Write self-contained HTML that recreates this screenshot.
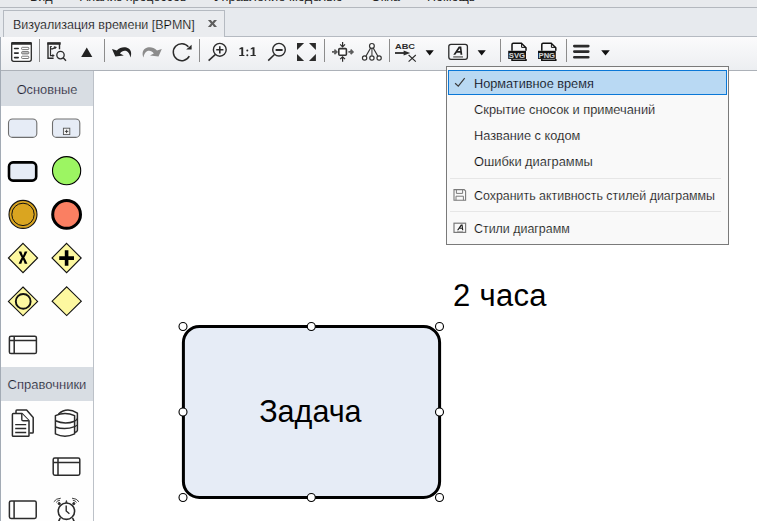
<!DOCTYPE html>
<html><head><meta charset="utf-8">
<style>
*{margin:0;padding:0;box-sizing:border-box}
html,body{width:757px;height:521px;overflow:hidden;background:#fff;font-family:"Liberation Sans",sans-serif;position:relative}
.a{position:absolute}
.t{white-space:nowrap;line-height:1}
.mi{position:absolute;left:474px;font-size:12.5px;color:#000;white-space:nowrap;line-height:1;-webkit-text-stroke:0.2px #f9f9f9}
.sep{position:absolute;top:39px;width:1px;height:23px;background:#8c8c8c}
.hdr{position:absolute;left:1px;width:92px;background:#d8dde3;color:#1f2430;-webkit-text-stroke:0.2px #d8dde3;font-size:12.5px;text-align:center;line-height:1}
</style></head><body>
<!-- top menu strip -->
<div class="a" style="left:0;top:0;width:757px;height:7px;background:#e8eaed"></div>
<div class="a" style="left:0;top:7px;width:757px;height:1px;background:#b4b8be"></div>
<div class="a" style="left:0;top:8px;width:757px;height:29px;background:#e7eaee"></div>
<div class="a t" style="left:30px;top:-9px;font-size:12.5px;color:#222">Вид</div>
<div class="a t" style="left:80px;top:-9px;font-size:12.5px;color:#222">Анализ процессов</div>
<div class="a t" style="left:214px;top:-9px;font-size:12.85px;color:#222">Управление моделью</div>
<div class="a t" style="left:371px;top:-9px;font-size:12.5px;color:#222">Окна</div>
<div class="a t" style="left:427px;top:-9px;font-size:12.5px;color:#222">Помощь</div>
<!-- tab -->
<div class="a" style="left:224px;top:36px;width:533px;height:1px;background:#b5bac1"></div>
<div class="a" style="left:3px;top:10px;width:222px;height:27px;background:#eaecef;border:1px solid #b5bac1;border-bottom:none"></div>
<div class="a t" style="left:13px;top:19px;font-size:12.5px;color:#000;-webkit-text-stroke:0.2px #eaecef">Визуализация времени [BPMN]</div>
<svg class="a" style="left:0;top:0" width="240" height="40" viewBox="0 0 240 40"><path d="M207.9 19.9H210.9L212.45 22.1L214 19.9H217L213.95 23.4L217 26.9H214L212.45 24.7L210.9 26.9H207.9L210.95 23.4Z" fill="#5e5e5e"/></svg>
<!-- toolbar -->
<div class="a" style="left:0;top:37px;width:757px;height:33px;background:linear-gradient(#fbfbfc,#eceef1)"></div>
<div class="a" style="left:0;top:70px;width:757px;height:1px;background:#acb1b8"></div>
<div class="a" style="left:0;top:37px;width:1px;height:484px;background:#a3abb5"></div>
<div class="sep" style="left:39px"></div>
<div class="sep" style="left:104px"></div>
<div class="sep" style="left:199px"></div>
<div class="sep" style="left:324px"></div>
<div class="sep" style="left:389px"></div>
<div class="sep" style="left:500px"></div>
<div class="sep" style="left:566px"></div>
<svg class="a" style="left:0;top:0" width="757" height="521" viewBox="0 0 757 521">
<!-- toolbar icon 1: properties -->
<g>
<rect x="11.7" y="42.7" width="19.6" height="18.6" rx="2" fill="#fff" stroke="#2b2b2b" stroke-width="1.3"/>
<rect x="11.1" y="42.1" width="20.8" height="2.6" rx="1" fill="#2b2b2b"/>
<g stroke="#2b2b2b" stroke-width="1.6" stroke-linecap="round"><path d="M14.6 48.5H18.2M14.6 53.1H18.2M14.6 57.6H18.2"/></g>
<g stroke="#6a6a6a" stroke-width="0.9" fill="#fff"><rect x="21.6" y="47.3" width="7.2" height="2.3" rx="0.8"/><rect x="21.6" y="51.6" width="7.2" height="2.3" rx="0.8" fill="#c4c4c4"/><rect x="21.6" y="56.2" width="7.2" height="2.3" rx="0.8"/></g>
</g>
<!-- icon 2: diagram preview -->
<g fill="none" stroke="#2b2b2b">
<path d="M59.5 49.3V43.5H48V58.2H53.6" stroke-width="1.4"/>
<rect x="47.3" y="42.2" width="13.4" height="2.5" fill="#2b2b2b" stroke="none"/>
<path d="M50.5 46.3V55.6H53.2M50.5 46.5H51.8M50.5 48.8H52.6L55 47.4" stroke-width="1.2"/>
<path d="M54.2 46.4L56.6 47.2L54.8 49Z M52.6 54.4L54.4 55.6L52.6 56.8Z" fill="#2b2b2b" stroke-width="0.5"/>
<circle cx="60.5" cy="55.1" r="3.7" stroke-width="1.3"/>
<path d="M63.2 57.8L66 60.8" stroke-width="1.4"/>
</g>
<!-- triangle up -->
<path d="M81.2 57L86.75 47.5L92.3 57Z" fill="#222"/>
<!-- undo -->
<path d="M112 49L115.3 56.6L123.8 55.6L120 53.4C121.6 51 124.2 50.2 126.4 51C128.6 51.9 129.9 54.4 130.3 57.6C131.8 54.2 131.4 50.6 128.6 48.6C125.4 46.6 120.4 46.8 116.8 50.6Z" fill="#222"/>
<!-- redo -->
<path d="M161.8 49L158.5 56.6L150 55.6L153.8 53.4C152.2 51 149.6 50.2 147.4 51C145.2 51.9 143.9 54.4 143.5 57.6C142 54.2 142.4 50.6 145.2 48.6C148.4 46.6 153.4 46.8 157 50.6Z" fill="#8c8c8c"/>
<!-- refresh -->
<path d="M189.3 56.2A8.5 8.5 0 1 1 188.4 46.8" fill="none" stroke="#2b2b2b" stroke-width="1.5"/>
<path d="M186.2 49.6L191.6 49.6L191.6 44.8Z" fill="#2b2b2b"/>
<!-- zoom in -->
<g fill="none" stroke="#2b2b2b">
<circle cx="219.8" cy="49.8" r="6.4" stroke-width="1.4"/>
<path d="M215.2 54.6L208.6 60.6" stroke-width="1.5"/>
<path d="M216.2 49.8H223.4M219.8 46.2V53.4" stroke-width="1.6"/>
<circle cx="279" cy="49.7" r="6.3" stroke-width="1.4"/>
<path d="M274.5 54.5L268.2 60.6" stroke-width="1.5"/>
<path d="M275.6 50H282.6" stroke-width="2"/>
</g>
<path d="M241.3 47.2H243.2V55.1H244.4V56.1H239.2V55.1H241.3V48.9L239.4 49.6V48.6Z M252.6 47.2H254.5V55.1H255.8V56.1H250.5V55.1H252.6V48.9L250.7 49.6V48.6Z" fill="#2b2b2b"/><circle cx="247.3" cy="50.4" r="1" fill="#2b2b2b"/><circle cx="247.3" cy="55.2" r="1" fill="#2b2b2b"/>
<!-- fit -->
<path d="M297 43H304.1L297 49.9Z M309 43H315.9V49.9Z M297 54.1V61H304.1Z M315.9 54.1V61H309Z" fill="#2b2b2b"/>
<!-- align -->
<g fill="none">
<rect x="338.8" y="48.6" width="7.6" height="6.6" rx="1" fill="#fff" stroke="#333" stroke-width="1.6"/>
<path d="M342.6 42V46.6M340.2 44.4L342.6 46.8L345 44.4M342.6 61.8V57M340.2 59.2L342.6 56.8L345 59.2" stroke="#2b2b2b" stroke-width="1.2"/>
<path d="M332 51.9H336.6M334.4 49.6L336.8 51.9L334.4 54.2M348.4 51.9H352.8M350.6 49.6L352.9 51.9L350.6 54.2" stroke="#5c5c5c" stroke-width="1.7"/>
</g>
<!-- tree -->
<g fill="#fff" stroke="#333" stroke-width="1.2">
<path d="M370.6 48L365.9 56.2M373.2 48L377.9 56.2" fill="none"/>
<path d="M371.9 48.6V55.5" stroke="#777" stroke-width="1.6" fill="none"/>
<circle cx="371.9" cy="45.9" r="2.4"/>
<circle cx="364.6" cy="58" r="2.15"/><circle cx="371.9" cy="58" r="2.15"/><circle cx="379.1" cy="58" r="2.15"/>
</g>
<!-- ABC -->
<text x="395" y="48.8" font-family="Liberation Sans" font-weight="bold" font-size="8" textLength="20" lengthAdjust="spacingAndGlyphs" fill="#2b2b2b">ABC</text>
<path d="M395 53H405" stroke="#2b2b2b" stroke-width="1.8"/>
<path d="M403.6 50.4L410.2 53L403.6 55.6Z" fill="#2b2b2b"/>
<path d="M408.6 55L415.8 61.6M415.8 55L408.6 61.6" stroke="#2b2b2b" stroke-width="1.1"/>
<!-- dropdown triangles -->
<path d="M425.6 50.3H433.8L429.7 55.4Z M477.6 50.3H485.8L481.7 55.4Z M601.2 50.3H609.8L605.5 55.4Z" fill="#111"/>
<!-- A style -->
<rect x="448.8" y="44.4" width="18.6" height="14.9" rx="2.2" fill="none" stroke="#2b2b2b" stroke-width="1.3"/>
<path d="M453.3 54.7H455.3L456.8 52.7H460.3L460.5 54.7H462.3L461.3 46.6H458.8Z M457.8 51.1H460.2L459.9 48.3Z" fill="#222" fill-rule="evenodd"/>
<path d="M453.2 56.9H463" stroke="#7a7a7a" stroke-width="1.6"/>
<!-- SVG doc -->
<g>
<path d="M512 50.8V44.6Q512 43.3 513.3 43.3H521.4L526 47.7V50.8M512 58.9V60.3H526V58.9" fill="none" stroke="#111" stroke-width="1.5"/>
<path d="M521.6 43.4V47.4H525.8" fill="none" stroke="#111" stroke-width="1"/>
<rect x="508.2" y="50.8" width="17.8" height="8.1" fill="#111"/>
<text x="508.8" y="57.6" font-family="Liberation Sans" font-weight="bold" font-size="8" textLength="16.2" lengthAdjust="spacingAndGlyphs" fill="#d0d0d0" stroke="#d0d0d0" stroke-width="0.15">SVG</text>
</g>
<g>
<path d="M541.8 50.8V44.6Q541.8 43.3 543.1 43.3H551.2L555.8 47.7V50.8M541.8 58.9V60.3H555.8V58.9" fill="none" stroke="#111" stroke-width="1.5"/>
<path d="M551.4 43.4V47.4H555.6" fill="none" stroke="#111" stroke-width="1"/>
<rect x="538" y="50.8" width="17.8" height="8.1" fill="#111"/>
<text x="538.6" y="57.6" font-family="Liberation Sans" font-weight="bold" font-size="8" textLength="16.4" lengthAdjust="spacingAndGlyphs" fill="#d0d0d0" stroke="#d0d0d0" stroke-width="0.15">PNG</text>
</g>
<!-- hamburger -->
<path d="M574.3 46.1H588.3M574.3 51.6H588.3M574.3 57.2H588.3" stroke="#2b2b2b" stroke-width="2.6" stroke-linecap="round"/>
</svg>
<!-- palette -->
<div class="a" style="left:1px;top:71px;width:92px;height:450px;background:#fefefe"></div>
<div class="a" style="left:93px;top:71px;width:1px;height:450px;background:#bcc1c8"></div>
<div class="hdr" style="top:71px;height:35px;padding-top:13px;font-size:12.8px">Основные</div>
<div class="hdr" style="top:367px;height:34px;padding-top:11px;font-size:13px">Справочники</div>
<svg class="a" style="left:0;top:0" width="757" height="521" viewBox="0 0 757 521">
<!-- palette row1 -->
<rect x="8.5" y="119" width="28.3" height="18.4" rx="4" fill="#e6ecf6" stroke="#6e6e6e" stroke-width="1.1"/>
<rect x="52.5" y="119" width="27.3" height="18.4" rx="4" fill="#e6ecf6" stroke="#6e6e6e" stroke-width="1.1"/>
<rect x="63.4" y="128.2" width="6.4" height="6.4" fill="#f4f4f4" stroke="#555" stroke-width="0.9"/>
<path d="M64.9 131.4H68.3M66.6 129.7V133.1" stroke="#333" stroke-width="0.9"/>
<!-- row2 -->
<rect x="9" y="162.4" width="27.2" height="18.2" rx="4" fill="#e6ecf6" stroke="#000" stroke-width="2.6"/>
<circle cx="66.6" cy="170.7" r="14.1" fill="#9cf562" stroke="#000" stroke-width="1.1"/>
<!-- row3 -->
<circle cx="23" cy="214.4" r="14" fill="#daa520" stroke="#111" stroke-width="1.1"/>
<circle cx="23" cy="214.4" r="11.2" fill="none" stroke="#111" stroke-width="1"/>
<circle cx="66.6" cy="214.4" r="13.9" fill="#fa7f62" stroke="#000" stroke-width="3"/>
<!-- row4 gateways -->
<path d="M23 243.3L37.6 258L23 272.7L8.4 258Z" fill="#fdf8a0" stroke="#111" stroke-width="1.1"/>
<path d="M18.6 251.5H21.3Q22.2 254.3 23 255.7Q23.8 254.3 24.7 251.5H27.4Q25.6 255.4 24.3 257.6Q25.6 259.8 27.4 263.7H24.7Q23.8 260.9 23 259.5Q22.2 260.9 21.3 263.7H18.6Q20.4 259.8 21.7 257.6Q20.4 255.4 18.6 251.5Z" fill="#000"/>
<path d="M66.6 243.3L81.2 258L66.6 272.7L52 258Z" fill="#fdf8a0" stroke="#111" stroke-width="1.1"/>
<path d="M59.2 258.1H74M66.6 250.2V265.8" stroke="#000" stroke-width="3.6"/>
<!-- row5 -->
<path d="M23 287L37.6 301.4L23 315.8L8.4 301.4Z" fill="#fdf8a0" stroke="#111" stroke-width="1.1"/>
<circle cx="23.2" cy="301.4" r="7.4" fill="#fdf8a0" stroke="#111" stroke-width="1.9"/>
<path d="M66.7 286.8L81.3 301.2L66.7 315.6L52.1 301.2Z" fill="#fdf8a0" stroke="#111" stroke-width="1.1"/>
<!-- row6 table -->
<g fill="none" stroke="#2b2b2b" stroke-width="1.5">
<rect x="9.4" y="336.2" width="27" height="17.3" rx="1.6"/>
<path d="M14.2 336.2V353.5M9.4 340.6H36.4"/>
</g>
<!-- spravochniki: documents -->
<g fill="#fff" stroke="#2b2b2b" stroke-width="1.5" stroke-linejoin="round">
<path d="M16 413.2V411Q16 410.1 16.9 410.1H26.6L33.2 417.4V432.2Q33.2 433 32.4 433H29.6"/>
<path d="M12.4 414.6Q12.4 413.6 13.4 413.6H22L29 420.8V435.4Q29 436.2 28.2 436.2H13.2Q12.4 436.2 12.4 435.4Z"/>
<path d="M21.8 413.8V419.4Q21.8 420.8 23.2 420.8H28.8" fill="#fff" stroke-width="1.4"/>
<path d="M15.2 424.6H26.2M15.2 428.5H26.2M15.2 432.5H26.2" stroke-width="1.4"/>
</g>
<!-- database -->
<g fill="#fff" stroke="#2b2b2b" stroke-width="1.5" stroke-linejoin="round">
<path d="M58.4 414Q67 406.4 77.4 413.2V430.4Q77.2 431.8 74.6 432.6"/>
<path d="M55.4 415.6Q65 411.2 74.6 415.6V433.8Q65 438.6 55.4 433.8Z"/>
<path d="M55.4 420.8Q65 425 74.6 421.2M55.4 427Q65 430.4 74.6 426.6" fill="none"/>
<path d="M74.6 421.2Q77 420 77.4 418.4M74.6 426.6Q77 425.6 77.4 425" fill="none" stroke-width="1.3"/>
</g>
<!-- table 2 -->
<g fill="none" stroke="#2b2b2b" stroke-width="1.5">
<rect x="53.2" y="458" width="26.6" height="17.2" rx="1.6"/>
<path d="M58 458V475.2M53.2 462.4H79.8"/>
<rect x="9.4" y="501" width="26.8" height="17.4" rx="1.6"/>
<path d="M14.1 501V518.4"/>
</g>
<!-- alarm clock -->
<g fill="none" stroke="#2b2b2b" stroke-width="1.6">
<circle cx="66.4" cy="511.2" r="8.2"/>
<path d="M66.2 505.6V511L69.4 513.8" stroke-width="1.4"/>
<path d="M60.2 518L58.6 521.5M72.6 518L74.2 521.5" stroke-width="1.6"/>
<path d="M53.8 501.8Q56 498.4 60.8 498.2M56.2 502.4Q57.4 500.6 60 500.2" stroke-width="0.9"/>
<path d="M79 501.8Q76.8 498.4 72 498.2M76.6 502.4Q75.4 500.6 72.8 500.2" stroke-width="0.9"/>
<circle cx="59.2" cy="503.6" r="1.1" fill="#2b2b2b" stroke-width="1"/>
<circle cx="73.8" cy="503.6" r="1.1" fill="#2b2b2b" stroke-width="1"/>
<path d="M65.6 502.6L66.4 500.4L67.2 502.6Z" fill="#2b2b2b" stroke-width="0.6"/>
</g>
<!-- canvas task -->
<rect x="183.4" y="326.6" width="256.2" height="170.8" rx="16" fill="#e6ecf6" stroke="#000" stroke-width="3"/>
<g fill="#fff" stroke="#000" stroke-width="1.1">
<circle cx="183" cy="326.5" r="4"/><circle cx="311.3" cy="326.5" r="4"/><circle cx="439.5" cy="326.5" r="4"/>
<circle cx="183" cy="412" r="4"/><circle cx="439.5" cy="412" r="4"/>
<circle cx="183" cy="497.5" r="4"/><circle cx="311.3" cy="497.5" r="4"/><circle cx="439.5" cy="497.5" r="4"/>
</g>
<text x="259.2" y="422" font-family="Liberation Sans" font-size="30.5" textLength="102.4" lengthAdjust="spacingAndGlyphs" fill="#000">Задача</text>
</svg>
<!-- canvas text -->
<div class="a t" style="left:453px;top:280px;font-size:31px;letter-spacing:0.3px;color:#000">2 часа</div>
<!-- menu -->
<div class="a" style="left:446px;top:66px;width:283px;height:179px;background:#f9f9f9;border:1px solid #7a7a7a"></div>
<div class="a" style="left:448px;top:70px;width:279px;height:25px;background:#b9d9f3;border:1px solid #0a78d7"></div>
<div class="mi" style="top:78px;font-size:12.72px;-webkit-text-stroke:0.2px #b9d9f3">Нормативное время</div>
<div class="mi" style="top:104px;font-size:12.83px">Скрытие сносок и примечаний</div>
<div class="mi" style="top:130px;font-size:12.75px">Название с кодом</div>
<div class="mi" style="top:156px;font-size:12.83px">Ошибки диаграммы</div>
<div class="a" style="left:450px;top:178px;width:271px;height:1px;background:#e6e6e6"></div>
<div class="mi" style="top:190px;font-size:12.42px">Сохранить активность стилей диаграммы</div>
<div class="a" style="left:450px;top:211px;width:271px;height:1px;background:#e6e6e6"></div>
<div class="mi" style="top:223px;font-size:12.43px">Стили диаграмм</div>
<svg class="a" style="left:0;top:0" width="757" height="521" viewBox="0 0 757 521">
<path d="M455.1 83.3L458.3 86.2L464.7 78.2" fill="none" stroke="#3a3a3a" stroke-width="1.15"/>
<g fill="none" stroke="#7a7a7a" stroke-width="1.1">
<path d="M454 189.6H464.2L465.6 191V200.2H454Z"/>
<path d="M456.4 189.8V193.4H462.6V189.8M456 200.2V196.2H463.4V200.2" stroke-width="1"/>
</g>
<rect x="454" y="223.2" width="11.6" height="9.2" fill="none" stroke="#7a7a7a" stroke-width="1.2"/>
<path d="M457 230.2H458.4L459.4 228.8H461.9L462.1 230.2H463.3L462.6 224.5H460.9Z M460.2 227.8H461.9L461.7 225.8Z" fill="#222" fill-rule="evenodd"/>
<path d="M457 231.6H463" stroke="#999" stroke-width="0.8"/>
</svg>
</body></html>
